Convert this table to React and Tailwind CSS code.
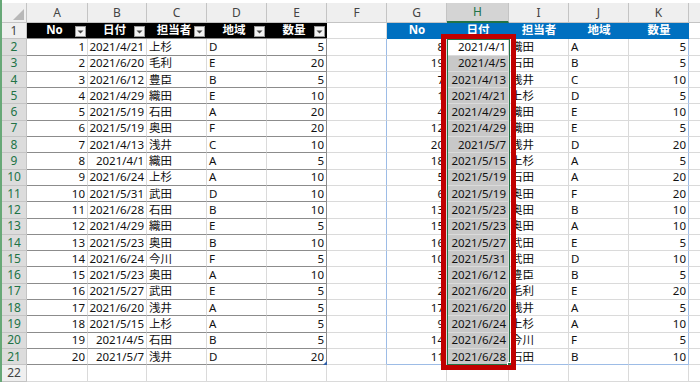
import React from "react";

const cols = [
  { k: "A", w: "w-[61px]" },
  { k: "B", w: "w-[59px]" },
  { k: "C", w: "w-[60px]" },
  { k: "D", w: "w-[60px]" },
  { k: "E", w: "w-[60px]" },
  { k: "F", w: "w-[60px]" },
  { k: "G", w: "w-[60px]" },
  { k: "H", w: "w-[62px]" },
  { k: "I", w: "w-[60px]" },
  { k: "J", w: "w-[60px]" },
  { k: "K", w: "w-[60px]" },
];

const heads = ["No", "日付", "担当者", "地域", "数量"];

const src = [
  [1, "2021/4/21", "上杉", "D", 5],
  [2, "2021/6/20", "毛利", "E", 20],
  [3, "2021/6/12", "豊臣", "B", 5],
  [4, "2021/4/29", "織田", "E", 10],
  [5, "2021/5/19", "石田", "A", 20],
  [6, "2021/5/19", "奥田", "F", 20],
  [7, "2021/4/13", "浅井", "C", 10],
  [8, "2021/4/1", "織田", "A", 5],
  [9, "2021/6/24", "上杉", "A", 10],
  [10, "2021/5/31", "武田", "D", 10],
  [11, "2021/6/28", "石田", "B", 10],
  [12, "2021/4/29", "織田", "E", 5],
  [13, "2021/5/23", "奥田", "B", 10],
  [14, "2021/6/24", "今川", "F", 5],
  [15, "2021/5/23", "奥田", "A", 10],
  [16, "2021/5/27", "武田", "E", 5],
  [17, "2021/6/20", "浅井", "A", 5],
  [18, "2021/5/15", "上杉", "A", 5],
  [19, "2021/4/5", "石田", "B", 5],
  [20, "2021/5/7", "浅井", "D", 20],
];

// same records, sorted by date
const sortedOrder = [8, 19, 7, 1, 4, 12, 20, 18, 5, 6, 13, 15, 16, 10, 3, 2, 17, 9, 14, 11];
const sorted = sortedOrder.map((n) => src[n - 1]);

const align = ["justify-end pr-[2px]", "justify-end pr-[2px]", "justify-start pl-[2px]", "justify-start pl-[2px]", "justify-end pr-[2px]"];

function Dropdown() {
  return (
    <div className="absolute right-[2px] top-[3px] w-[11px] h-[11px] bg-[#f3f3f3] border border-[#9a9a9a] flex items-center justify-center">
      <svg width="7" height="4" viewBox="0 0 7 4">
        <path d="M0.5 0.5 L6.5 0.5 L3.5 3.5 Z" fill="#444" />
      </svg>
    </div>
  );
}

function DataCell({ r, c }) {
  const col = cols[c];
  const base = `${col.w} h-full shrink-0 flex items-center overflow-hidden whitespace-nowrap`;

  // left table
  if (c <= 4) {
    if (r === 1) {
      return (
        <div className={`${base} relative bg-black text-white font-bold justify-center border-b border-[#8c8c8c]`}>
          <span className="pr-[6px] -mt-[2px]">{heads[c]}</span>
          <Dropdown />
        </div>
      );
    }
    if (r <= 21) {
      const v = src[r - 2][c];
      const edge = c === 4 ? "border-r border-[#8c8c8c]" : "border-r border-[#dadada]";
      return (
        <div className={`${base} ${align[c]} bg-white ${edge} border-b border-b-[#8c8c8c]`}>
          {v}
        </div>
      );
    }
  }

  // right table
  if (c >= 6 && c <= 10) {
    const i = c - 6;
    if (r === 1) {
      return (
        <div className={`${base} bg-[#0070c0] text-white font-bold justify-center`}>
          <span className="-mt-[2px]">{heads[i]}</span>
        </div>
      );
    }
    if (r <= 21) {
      const v = sorted[r - 2][i];
      const right = c === 10 ? "border-r border-r-[#9dbce6]" : "border-r border-r-[#dadada]";
      const bottom = r === 21 ? "border-b border-b-[#9dbce6]" : "border-b border-b-[#dadada]";
      const fill = c === 7 && r >= 3 ? "bg-[#c8c8c8]" : "bg-white";
      return (
        <div className={`${base} ${align[i]} ${fill} ${right} ${bottom}`}>{v}</div>
      );
    }
  }

  // column F next to the right table
  if (c === 5 && r >= 2 && r <= 21) {
    return <div className={`${base} border-r border-r-[#9dbce6] border-b border-b-[#dadada]`} />;
  }

  return <div className={`${base} border-r border-b border-[#dadada]`} />;
}

function Row({ r }) {
  const sel = r >= 2 && r <= 21;
  return (
    <div className="flex h-[16.3px]">
      <div
        className={`w-[25px] shrink-0 h-full flex items-center justify-center border-r border-b border-[#c4c4c4] text-[12px] font-['Noto_Sans',sans-serif] ${
          sel ? "bg-[#dcdcdc] text-[#217346]" : "bg-[#efefef] text-[#444]"
        }`}
      >
        {r}
      </div>
      {cols.map((col, c) => (
        <DataCell key={col.k} r={r} c={c} />
      ))}
      <div className="flex-1 h-full border-b border-[#dadada]" />
    </div>
  );
}

export default function App() {
  const rows = Array.from({ length: 22 }, (_, i) => i + 1);
  return (
    <div className="relative w-[700px] h-[382px] overflow-hidden bg-white border-l-2 border-[#67a877] text-[11.5px] leading-[16px] text-[#111] font-['Noto_Sans','Noto_Sans_CJK_JP',sans-serif]">
      <div className="h-[3px] bg-white" />

      {/* column headers */}
      <div className="flex h-[20px] text-[12px] font-['Noto_Sans',sans-serif]">
        <div className="w-[25px] shrink-0 h-full bg-[#efefef] border-r border-b border-[#c4c4c4] flex items-end justify-end p-[2px]">
          <svg width="11" height="11" viewBox="0 0 11 11">
            <path d="M11 0 L11 11 L0 11 Z" fill="#b8b8b8" />
          </svg>
        </div>
        {cols.map((col) =>
          col.k === "H" ? (
            <div
              key={col.k}
              className={`${col.w} shrink-0 h-full flex items-center justify-center bg-[#d4d4d4] text-[#217346] border-r border-[#c4c4c4] border-b-2 border-b-[#217346]`}
            >
              {col.k}
            </div>
          ) : (
            <div
              key={col.k}
              className={`${col.w} shrink-0 h-full flex items-center justify-center bg-[#efefef] text-[#444] border-r border-b border-[#c4c4c4]`}
            >
              {col.k}
            </div>
          )
        )}
        <div className="flex-1 h-full bg-[#efefef] border-b border-[#c4c4c4]" />
      </div>

      {rows.map((r) => (
        <Row key={r} r={r} />
      ))}

      {/* selection H2:H21 */}
      <div className="absolute left-[445px] top-[39px] w-[63px] h-[326px] border border-[#217346] pointer-events-none" />
      <div className="absolute left-[505px] top-[362px] w-[5px] h-[5px] bg-[#217346] border border-white" />

      {/* left table resize handle */}
      <svg className="absolute left-[321px] top-[361px]" width="4" height="4" viewBox="0 0 4 4">
        <path d="M4 0 L4 4 L0 4 Z" fill="#2f5fa8" />
      </svg>

      {/* red highlight frame */}
      <div className="absolute left-[439px] top-[34px] w-[75px] h-[336px] border-[5px] border-[#c00000] pointer-events-none" />
    </div>
  );
}
